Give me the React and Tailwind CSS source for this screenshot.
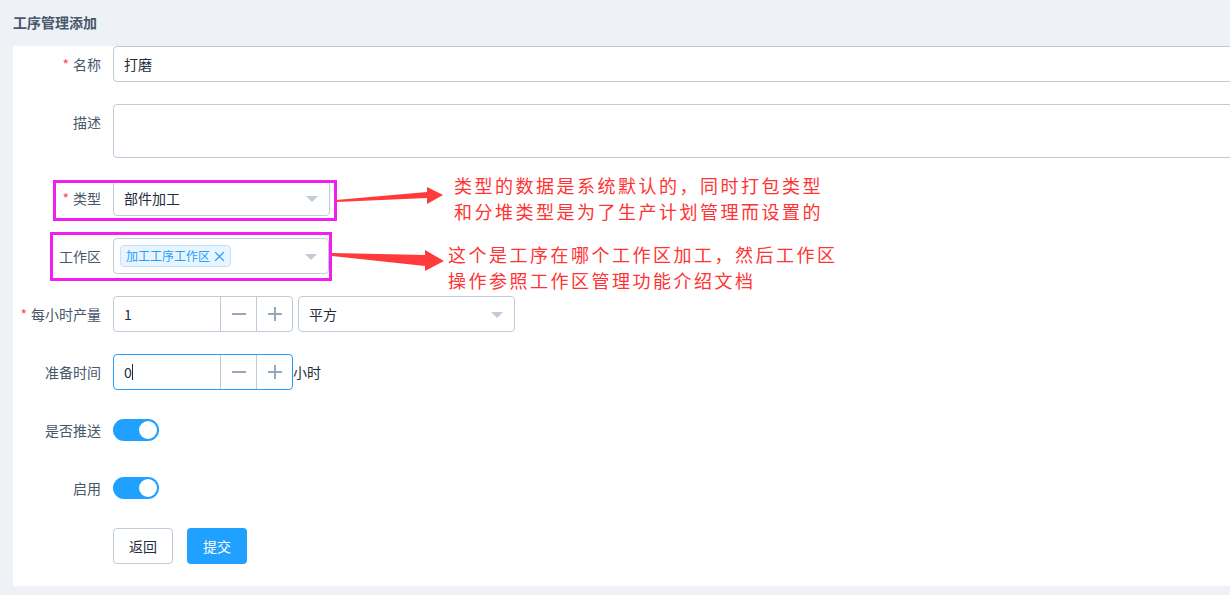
import React from "react";

const font = { fontFamily: '"Noto Sans CJK SC", "Noto Sans", sans-serif' };

const Label = ({ required, children }) => (
  <div className="w-[100px] shrink-0 pr-[12px] text-right text-[14px] leading-[36px] text-[#48576a]">
    {required && <span className="text-[#ff4949] mr-[4px]">*</span>}
    {children}
  </div>
);

const Arrow = () => (
  <span className="absolute right-[11px] top-[15px] w-0 h-0 border-l-[6px] border-r-[6px] border-t-[6px] border-l-transparent border-r-transparent border-t-[#bfcbd9]" />
);

const Stepper = ({ value, focused }) => (
  <div
    className={
      "flex w-[180px] h-[36px] rounded-[4px] border bg-white " +
      (focused ? "border-[#20a0ff]" : "border-[#bfcbd9]")
    }
  >
    <div className="flex-1 flex items-center pl-[10px] text-[14px] text-[#1f2d3d]">
      {value}
      {focused && <span className="inline-block w-[1px] h-[16px] bg-[#1f2d3d]" />}
    </div>
    <div className="w-[36px] flex items-center justify-center border-l border-[#bfcbd9]">
      <svg width="16" height="16" viewBox="0 0 16 16">
        <line x1="1" y1="8" x2="15" y2="8" stroke="#97a8be" strokeWidth="2" />
      </svg>
    </div>
    <div className="w-[36px] flex items-center justify-center border-l border-[#bfcbd9]">
      <svg width="16" height="16" viewBox="0 0 16 16">
        <line x1="1" y1="8" x2="15" y2="8" stroke="#97a8be" strokeWidth="2" />
        <line x1="8" y1="1" x2="8" y2="15" stroke="#97a8be" strokeWidth="2" />
      </svg>
    </div>
  </div>
);

const Toggle = () => (
  <div className="h-[36px] flex items-center">
    <div className="w-[46px] h-[22px] rounded-full bg-[#20a0ff] flex items-center justify-end pr-[2px]">
      <div className="w-[18px] h-[18px] rounded-full bg-white" />
    </div>
  </div>
);

export default function App() {
  return (
    <div className="relative w-full h-[595px] overflow-hidden bg-[#eef1f6]" style={font}>
      {/* Titre */}
      <div className="h-[46px] pl-[13px] pt-[12px] text-[14px] font-bold text-[#48576a]">
        工序管理添加
      </div>

      {/* Carte formulaire */}
      <div className="ml-[13px] bg-white w-[1300px]">
        <div className="flex mb-[22px]">
          <Label required>名称</Label>
          <div className="w-[1140px] h-[36px] border border-[#bfcbd9] rounded-[4px] px-[10px] flex items-center text-[14px] text-[#1f2d3d]">
            打磨
          </div>
        </div>

        <div className="flex mb-[22px]">
          <Label>描述</Label>
          <div className="w-[1140px] h-[54px] border border-[#bfcbd9] rounded-[4px]" />
        </div>

        <div className="flex mb-[22px]">
          <Label required>类型</Label>
          <div className="relative w-[217px] h-[36px] border border-[#bfcbd9] rounded-[4px] px-[10px] flex items-center text-[14px] text-[#1f2d3d]">
            部件加工
            <Arrow />
          </div>
        </div>

        <div className="flex mb-[22px]">
          <Label>工作区</Label>
          <div className="relative w-[216px] h-[36px] border border-[#bfcbd9] rounded-[4px] pl-[6px] flex items-center">
            <span className="flex items-center h-[22px] px-[5px] gap-[4px] rounded-[4px] border border-[#bfe2ff] bg-[#e8f5ff] text-[12px] text-[#20a0ff]">
              加工工序工作区
              <svg width="11" height="11" viewBox="0 0 10 10">
                <path d="M1 1L9 9M9 1L1 9" stroke="#20a0ff" strokeWidth="1.2" />
              </svg>
            </span>
            <Arrow />
          </div>
        </div>

        <div className="flex mb-[22px]">
          <Label required>每小时产量</Label>
          <Stepper value="1" />
          <div className="relative ml-[5px] w-[217px] h-[36px] border border-[#bfcbd9] rounded-[4px] px-[10px] flex items-center text-[14px] text-[#1f2d3d]">
            平方
            <Arrow />
          </div>
        </div>

        <div className="flex mb-[22px]">
          <Label>准备时间</Label>
          <Stepper value="0" focused />
          <span className="leading-[36px] text-[14px] text-[#1f2d3d]">小时</span>
        </div>

        <div className="flex mb-[22px]">
          <Label>是否推送</Label>
          <Toggle />
        </div>

        <div className="flex mb-[22px]">
          <Label>启用</Label>
          <Toggle />
        </div>

        <div className="flex pb-[22px]">
          <div className="w-[100px]" />
          <button className="w-[60px] h-[36px] rounded-[4px] border border-[#bfcbd9] bg-white text-[14px] text-[#1f2d3d]">
            返回
          </button>
          <button className="ml-[14px] w-[60px] h-[36px] rounded-[4px] bg-[#20a0ff] text-[14px] text-white">
            提交
          </button>
        </div>
      </div>

      {/* Annotations */}
      <div className="absolute left-[53px] top-[180px] w-[284px] h-[41px] border-[3px] border-[#f01ff0]" />
      <div className="absolute left-[50px] top-[232px] w-[282px] h-[49px] border-[3px] border-[#f01ff0]" />

      <svg className="absolute left-0 top-0" width="1230" height="595">
        <polygon points="336,200 427,192 427,187 443,195 427,204 427,198 336,202" fill="#ff3a3a" />
        <polygon points="332,253 425,255 425,250 444,261 425,271 425,266 332,256" fill="#ff3a3a" />
      </svg>

      <div className="absolute left-[454px] top-[172px] text-[18px] leading-[26px] tracking-[2.5px] text-[#ff3333]">
        <div>类型的数据是系统默认的，同时打包类型</div>
        <div>和分堆类型是为了生产计划管理而设置的</div>
      </div>
      <div className="absolute left-[448px] top-[241px] text-[18px] leading-[26px] tracking-[2.5px] text-[#ff3333]">
        <div>这个是工序在哪个工作区加工，然后工作区</div>
        <div>操作参照工作区管理功能介绍文档</div>
      </div>
    </div>
  );
}
